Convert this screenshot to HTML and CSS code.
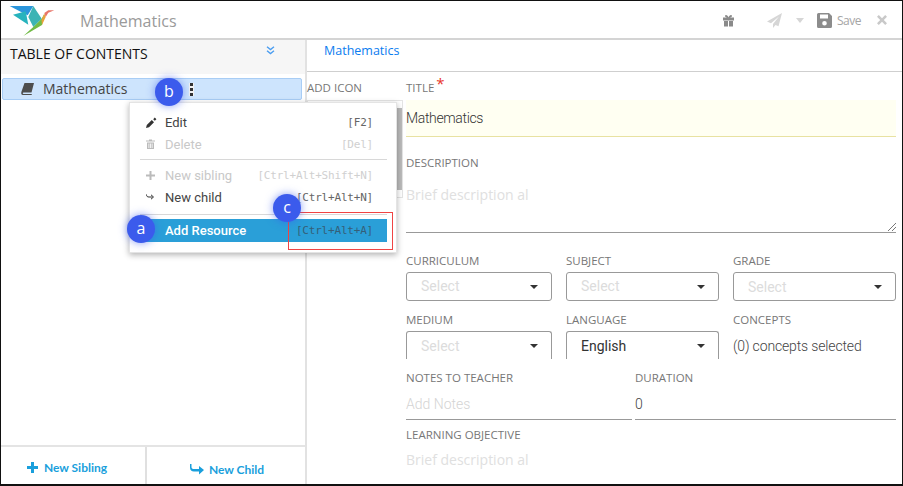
FILE: index.html
```html
<!DOCTYPE html>
<html lang="en">
<head>
<meta charset="utf-8">
<title>Mathematics</title>
<link rel="stylesheet" href="styles.css">
</head>
<body>
<div class="frame">
  <header class="topbar">
    <svg class="logo" width="46" height="34" viewBox="0 0 46 34">
      <polygon points="0.700,2 24.300,2 18.700,11.300 14,9" fill="#2b96dc"/>
      <polygon points="4,10.700 16.700,7.300 19.300,20.700" fill="#27b3bd"/>
      <polygon points="24.300,2 32.700,14.700 24.300,23 19.300,13" fill="#3cb4b4"/>
      <polygon points="32.700,14.700 35.300,9.700 33,21 14.300,32 24.300,23" fill="#72bb46"/>
      <polygon points="35.300,9.700 36.700,13 33,21 32.500,16" fill="#e9a23b"/>
      <polygon points="35.300,9 39.300,6.300 45.300,6.300 39.300,8.700 36.700,13" fill="#e8766a"/>
    </svg>
    <span class="doc-title">Mathematics</span>
    <div class="actions">
      <svg class="gift" width="13" height="13" viewBox="0 0 13 13"><path d="M1 3.500h11v3H1zM2 7h4v5.500H2zM7 7h4v5.500H7zM3 1.500C4 .2 6 1.500 6.500 3.500 4.500 3.500 2.500 3 3 1.500zM10 1.500C9 .2 7 1.500 6.500 3.500 8.500 3.500 10.500 3 10 1.500z" fill="#8a8a8a"/></svg>
      <svg class="plane" width="15" height="15" viewBox="0 0 15 15"><path d="M15 0 0 8.500l4 1.700L12 3.500 6 11v4l2.500-3 3 1.300z" fill="#d6d6d6"/></svg>
      <span class="caret-light"></span>
      <svg class="floppy" width="15" height="15" viewBox="0 0 15 15"><path fill-rule="evenodd" d="M1.500 0H12l3 3v10.500A1.500 1.500 0 0 1 13.500 15h-12A1.500 1.500 0 0 1 0 13.500v-12A1.500 1.500 0 0 1 1.500 0zM3 1.500V5.500h8V1.500zM7.500 8a2.300 2.300 0 1 0 0 4.600 2.300 2.300 0 0 0 0-4.600z" fill="#8c8c8c"/></svg>
      <span class="save">Save</span>
      <svg class="close" width="10" height="10" viewBox="0 0 11 11"><path d="M2 0 5.500 3.500 9 0l2 2-3.500 3.500L11 9l-2 2-3.500-3.500L2 11 0 9l3.500-3.500L0 2z" fill="#c9c9c9"/></svg>
    </div>
  </header>

  <div class="workspace">
    <aside class="sidebar">
      <div class="toc-head">
        <span class="toc-title">TABLE OF CONTENTS</span>
        <svg class="toc-chevrons" width="9" height="9" viewBox="0 0 9 9"><path d="M1 .8 4.500 3.500 8 .8M1 4.800 4.500 7.500 8 4.800" fill="none" stroke="#4a9df0" stroke-width="1.400"/></svg>
      </div>
      <div class="tree">
        <div class="tree-row">
          <svg class="book" width="13" height="12" viewBox="0 0 13 12"><path d="M3.500 0H13L10.500 9.500H2.500C1.500 9.500 1.500 11 2.500 11H11L10.500 12H2C0 12 0 10 .5 8.500z" fill="#4d4d4d"/></svg>
          <span>Mathematics</span>
          <span class="kebab"><i></i><i></i><i></i></span>
        </div>
      </div>
      <div class="side-foot">
        <div class="foot-btn foot-sibling">
          <svg width="11" height="11" viewBox="0 0 11 11"><path d="M4 0h3v4h4v3H7v4H4V7H0V4h4z" fill="#1a9fdc"/></svg>
          <span>New Sibling</span>
        </div>
        <div class="foot-btn foot-child">
          <svg width="14" height="11" viewBox="0 0 14 11"><path d="M1.500 0v3C1.500 4.500 2.500 5 4 5h5V2l5 4-5 4.500V7.500H4C1.500 7.500 0 6 0 3.500V0z" fill="#1a9fdc"/></svg>
          <span>New Child</span>
        </div>
      </div>
    </aside>

    <main class="content">
      <div class="crumb">Mathematics</div>
      <div class="editor">
        <div class="icon-col"><div class="label">ADD ICON</div><div class="icon-box"></div></div>
        <form class="form">
          <div class="label title-label">TITLE<span class="req">*</span></div>
          <div class="title-input">Mathematics</div>
          <div class="label desc-label">DESCRIPTION</div>
          <div class="textarea">Brief description al
            <svg class="grip" width="8" height="8" viewBox="0 0 8 8"><path d="M8 0 0 8M8 4 4 8" stroke="#777" stroke-width="1"/></svg>
          </div>
          <div class="select-grid">
            <div class="field"><div class="label">CURRICULUM</div><div class="select ph">Select<b></b></div></div>
            <div class="field"><div class="label">SUBJECT</div><div class="select ph">Select<b></b></div></div>
            <div class="field"><div class="label">GRADE</div><div class="select ph low">Select<b></b></div></div>
            <div class="field"><div class="label">MEDIUM</div><div class="select ph cut">Select<b></b></div></div>
            <div class="field"><div class="label">LANGUAGE</div><div class="select cut">English<b></b></div></div>
            <div class="field"><div class="label">CONCEPTS</div><div class="concepts">(0) concepts selected</div></div>
          </div>
          <div class="notes-row">
            <div class="field"><div class="label">NOTES TO TEACHER</div><div class="line-input ph">Add Notes</div></div>
            <div class="field"><div class="label">DURATION</div><div class="line-input">0</div></div>
          </div>
          <div class="label lo-label">LEARNING OBJECTIVE</div>
          <div class="lo-ph">Brief description al</div>
        </form>
      </div>
    </main>
  </div>

  <div class="scrollthumb"></div>

  <div class="menu">
    <div class="mi"><svg width="11" height="11" viewBox="0 0 11 11"><path d="M0 11 .8 8 5.800 3 8 5.200 3 10.200zM7.200 2.200 8.800.6 10.400 2.200 8.800 3.800z" fill="#333"/></svg><span class="mi-text">Edit</span><span class="key">[F2]</span></div>
    <div class="mi off"><svg width="9" height="10" viewBox="0 0 9 10"><path fill-rule="evenodd" d="M0 1.500h3V.5h3v1h3V2.500H0zM1 3.500h7V10H1zM2.500 4.500v4.500h.8V4.500zM4.100 4.500v4.500h.8V4.500zM5.700 4.500v4.500h.8V4.500z" fill="#bbb"/></svg><span class="mi-text">Delete</span><span class="key">[Del]</span></div>
    <div class="sep sep-first"></div>
    <div class="mi off"><svg width="9" height="9" viewBox="0 0 9 9"><path d="M3.500 0h2v3.500H9v2H5.500V9h-2V5.500H0v-2h3.500z" fill="#bbb"/></svg><span class="mi-text">New sibling</span><span class="key">[Ctrl+Alt+Shift+N]</span></div>
    <div class="mi"><svg width="9" height="8" viewBox="0 0 9 8"><path d="M.5 1.500C.5 3.500 1.500 4 3 4h3.500M5 1.800 7.500 4 5 6.200" fill="none" stroke="#333" stroke-width="1"/></svg><span class="mi-text">New child</span><span class="key">[Ctrl+Alt+N]</span></div>
    <div class="sep sep-second"></div>
    <div class="mi active"><span class="mi-text">Add Resource</span><span class="key">[Ctrl+Alt+A]</span></div>
  </div>

  <div class="redbox"></div>
  <div class="badge badge-a">a</div>
  <div class="badge badge-b">b</div>
  <div class="badge badge-c">c</div>
</div>
</body>
</html>
```

FILE: styles.css
```css
* { box-sizing: border-box; }
html, body { margin: 0; padding: 0; background: #fff; }
body { width: 903px; height: 486px; overflow: hidden; font-family: Roboto, sans-serif; }

.frame {
  position: relative;
  width: 903px;
  height: 486px;
  border: 1px solid #111;
  border-bottom-width: 2px;
  background: #fff;
  display: flex;
  flex-direction: column;
  overflow: hidden;
}

.topbar {
  height: 39px;
  flex: none;
  display: flex;
  align-items: center;
  border-bottom: 2px solid #d4d4d4;
  padding-left: 8px;
}
.logo { flex: none; margin-top: 3px; }
.doc-title { margin: 2px 0 0 25px; font: 16px "Open Sans", sans-serif; color: #9a9a9a; }
.actions { margin-left: auto; display: flex; align-items: center; padding: 1px 15px 0 0; }
.plane { margin-left: 32px; }
.caret-light { margin-left: 14px; border: 4px solid transparent; border-top: 5px solid #d6d6d6; border-bottom: 0; }
.floppy { margin-left: 13px; }
.save { margin-left: 5px; font: 12px "Open Sans", sans-serif; color: #a5a5a5; letter-spacing: -.5px; }
.close { margin-left: 16px; }

.workspace { flex: 1; display: flex; min-height: 0; }

.sidebar {
  width: 306px;
  flex: none;
  display: flex;
  flex-direction: column;
  border-right: 2px solid #e2e2e2;
}
.toc-head {
  height: 34px;
  background: #f6f6f6;
  display: flex;
  justify-content: space-between;
  padding: 5px 30px 0 9px;
}
.toc-title { font: 14px "Open Sans", sans-serif; color: #111; line-height: 17px; }
.toc-chevrons { margin-top: 1px; }
.tree { flex: 1; padding: 4px 3px 0 1px; }
.tree-row {
  height: 22px;
  background: #cde4fd;
  border: 1px solid #a8cdf5;
  border-radius: 2px;
  display: flex;
  align-items: center;
  padding: 0 0 1px 18px;
  font: 14px "Open Sans", sans-serif;
  color: #444;
}
.book { margin-right: 9px; }
.kebab { display: flex; flex-direction: column; gap: 2px; margin: 2px 0 0 62px; padding: 0 1px; background: #f1f1f1; }
.kebab i { width: 3px; height: 3px; background: #333; }

.side-foot { height: 39px; display: flex; border-top: 2px solid #e4e4e4; }
.foot-btn {
  display: flex;
  align-items: center;
  justify-content: center;
  font: 700 12px Lato, sans-serif;
  color: #1a9fdc;
}
.foot-sibling { width: 146px; gap: 6px; border-right: 2px solid #e0e0e0; padding: 4px 12px 0 0; }
.foot-child { flex: 1; gap: 5px; padding: 8px 0 0 2px; }

.content { flex: 1; display: flex; flex-direction: column; min-width: 0; }
.crumb {
  height: 32px;
  flex: none;
  border-bottom: 1px solid #cfcfcf;
  padding: 2px 0 0 17px;
  font: 12.500px "Open Sans", sans-serif;
  color: #0a7cf0;
  line-height: 17px;
}
.editor { display: flex; flex: 1; min-height: 0; }
.icon-col { width: 99px; flex: none; padding-top: 9px; }
.icon-box { height: 98px; width: 96px; margin-top: 5px; border: 1px solid #e4e4e4; }
.label { font: 11.500px "Open Sans", sans-serif; color: #777; line-height: 14px; white-space: nowrap; }

.form { width: 490px; padding-top: 9px; }
.req { color: #e8342a; font-size: 15px; line-height: 10px; margin-left: 2px; position: relative; top: -3px; }
.title-input {
  height: 37px;
  margin-top: 5px;
  background: #fffff2;
  border-bottom: 1px solid #e8e2a2;
  font-size: 14px;
  font-weight: 300;
  letter-spacing: -.35px;
  line-height: 36px;
  color: #333;
}
.desc-label { margin-top: 19px; }
.textarea {
  position: relative;
  height: 53px;
  margin-top: 10px;
  border-bottom: 1px solid #999;
  font: 14px "Open Sans", sans-serif;
  color: #e0e0e0;
  line-height: 30px;
}
.grip { position: absolute; right: 0; bottom: 1px; }

.select-grid {
  display: grid;
  grid-template-columns: 146px 153px 163px;
  column-gap: 14px;
  row-gap: 12px;
  margin-top: 21px;
}
.select {
  position: relative;
  height: 29px;
  margin-top: 4px;
  border: 1px solid #999;
  border-radius: 3px;
  padding-left: 14px;
  font-size: 14px;
  line-height: 27px;
  color: #333;
}
.select.ph { color: #dcdcdc; }
.select.low { line-height: 29px; }
.select.cut { height: 28px; border-bottom: 0; border-radius: 3px 3px 0 0; line-height: 29px; }
.select b {
  position: absolute;
  right: 13px;
  top: 12px;
  border: 4px solid transparent;
  border-top: 4px solid #333;
  border-bottom: 0;
}
.concepts { margin-top: 5px; font-size: 14px; font-weight: 300; letter-spacing: -.15px; line-height: 29px; color: #444; }

.notes-row { display: grid; grid-template-columns: 226px 261px; column-gap: 3px; margin-top: 10px; }
.line-input {
  height: 30px;
  margin-top: 5px;
  border-bottom: 1px solid #999;
  font-size: 14px;
  font-weight: 300;
  line-height: 29px;
  color: #444;
}
.line-input.ph { color: #d4d4d4; }
.lo-label { margin-top: 8px; }
.lo-ph { margin-top: 8px; font: 14px "Open Sans", sans-serif; color: #e0e0e0; line-height: 19px; }

.scrollthumb { position: absolute; left: 396px; top: 107px; width: 5px; height: 82px; background: #bbb; }

.menu {
  position: absolute;
  left: 128px;
  top: 101px;
  width: 268px;
  height: 151px;
  background: #fff;
  border: 1px solid #e4e4e4;
  box-shadow: 0 2px 6px rgba(0,0,0,.3);
  padding: 8px 9px 0 15px;
}
.mi {
  height: 22px;
  display: flex;
  align-items: center;
  font-size: 13px;
  color: #444;
}
.mi svg { flex: none; margin-left: 1px; }
.mi-text { position: absolute; left: 35px; }
.key { margin-left: auto; margin-right: 14px; font: 11px "DejaVu Sans Mono", monospace; letter-spacing: -.2px; color: #666; }
.mi.off { color: #c8c8c8; }
.mi.off .key { color: #d0d0d0; }
.sep { height: 1px; margin-left: -5px; background: #d8d8d8; }
.sep-first { margin-top: 4px; margin-bottom: 4px; }
.sep-second { margin-top: 6px; margin-bottom: 4px; }
.mi.active {
  height: 23px;
  margin-left: -5px;
  background: #2a9fd8;
  color: #fff;
  font-weight: 500;
}
.mi.active .key { color: #355f78; }

.redbox { position: absolute; left: 287px; top: 211px; width: 105px; height: 38px; border: 1px solid #ef4444; }

.badge {
  position: absolute;
  width: 28px;
  height: 28px;
  border-radius: 50%;
  background: #3b5bec;
  color: #fff;
  font: 16px/27px "Open Sans", sans-serif;
  text-align: center;
  box-shadow: 0 0 8px rgba(59,91,236,.6);
}
.badge-a { left: 126px; top: 214px; }
.badge-b { left: 154px; top: 77px; }
.badge-c { left: 272px; top: 193px; }
```
